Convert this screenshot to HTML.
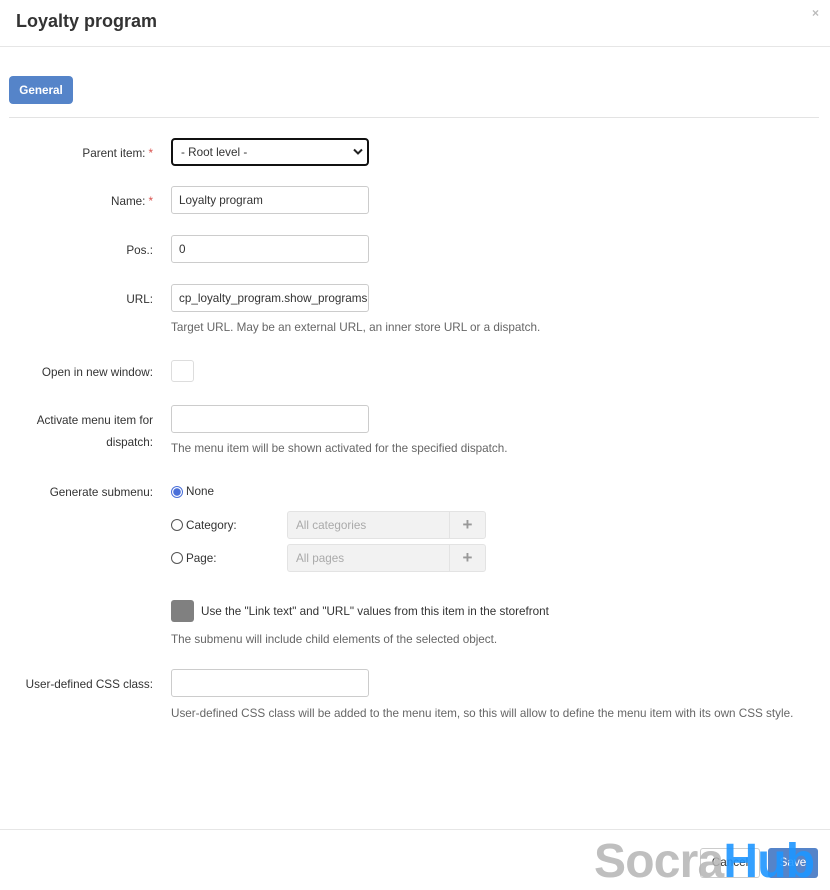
<!DOCTYPE html>
<html><head><meta charset="utf-8"><style>
*{box-sizing:border-box;margin:0;padding:0}
body{width:830px;height:889px;background:#fff;font-family:"Liberation Sans",Arial,sans-serif;font-size:11.7px;color:#333;position:relative;overflow:hidden}
.a{position:absolute}
.lbl{position:absolute;right:677px;text-align:right;color:#333;line-height:16px;white-space:nowrap;margin-top:1px}
.req{color:#d9534f;margin-left:3px}
.inp{position:absolute;left:171px;width:198px;height:28px;border:1px solid #ccc;border-radius:3px;background:#fff;padding:0 7px;line-height:27px;color:#333;white-space:nowrap;overflow:hidden}
.help{position:absolute;left:171px;color:#666;line-height:14px;white-space:nowrap;margin-top:1px}
.radio{position:absolute;left:171px;width:12px;height:12px;border:1px solid #555;border-radius:50%;background:#fff}
.pick{position:absolute;left:287px;width:199px;height:28px;border:1px solid #e3e3e3;border-radius:3px;background:#f2f2f2;color:#aaa;padding-left:8px;line-height:27px}
.pick span{position:absolute;right:0;top:0;width:36px;height:26px;border-left:1px solid #e3e3e3;text-align:center;color:#999;font-size:17px;font-weight:bold;line-height:25px}
</style></head><body>
<div class="a" style="left:16px;top:11px;font-size:18px;font-weight:bold;color:#333">Loyalty program</div>
<div class="a" style="left:812px;top:6px;color:#bbb;font-size:12px;font-weight:bold">×</div>
<div class="a" style="left:0;top:46px;width:830px;height:1px;background:#e6e6e6"></div>
<div class="a" style="left:9px;top:76px;width:64px;height:28px;background:#5584c9;border-radius:4px;color:#fff;font-weight:bold;text-align:center;line-height:29px">General</div>
<div class="a" style="left:9px;top:117px;width:810px;height:1px;background:#e3e3e3"></div>

<div class="lbl" style="top:145px">Parent item:<span class="req">*</span></div>
<div class="inp" style="top:138px;border:2px solid #111;border-radius:4px;line-height:25px;padding-left:8px">- Root level -</div>
<svg class="a" style="left:353px;top:148px" width="10" height="8"><path d="M1 1.5L5 5.5L9 1.5" fill="none" stroke="#222" stroke-width="2"/></svg>

<div class="lbl" style="top:193px">Name:<span class="req">*</span></div>
<div class="inp" style="top:186px">Loyalty program</div>

<div class="lbl" style="top:242px">Pos.:</div>
<div class="inp" style="top:235px">0</div>

<div class="lbl" style="top:291px">URL:</div>
<div class="inp" style="top:284px">cp_loyalty_program.show_programs</div>
<div class="help" style="top:320px">Target URL. May be an external URL, an inner store URL or a dispatch.</div>

<div class="lbl" style="top:364px">Open in new window:</div>
<div class="a" style="left:171px;top:360px;width:23px;height:22px;border:1px solid #ddd;border-radius:3px"></div>

<div class="lbl" style="top:409px;line-height:22px">Activate menu item for<br>dispatch:</div>
<div class="inp" style="top:405px"></div>
<div class="help" style="top:441px">The menu item will be shown activated for the specified dispatch.</div>

<div class="lbl" style="top:484px">Generate submenu:</div>
<div class="radio" style="top:486px;border-color:#4a6fd9;background:radial-gradient(circle,#4a6fd9 3.5px,#fff 4px)"></div>
<div class="a" style="left:186px;top:485px">None</div>
<div class="radio" style="top:519px"></div>
<div class="a" style="left:186px;top:519px">Category:</div>
<div class="pick" style="top:511px">All categories<span>+</span></div>
<div class="radio" style="top:552px"></div>
<div class="a" style="left:186px;top:552px">Page:</div>
<div class="pick" style="top:544px">All pages<span>+</span></div>

<div class="a" style="left:171px;top:600px;width:23px;height:22px;background:#808080;border-radius:3px"></div>
<div class="a" style="left:201px;top:605px">Use the "Link text" and "URL" values from this item in the storefront</div>
<div class="help" style="top:632px">The submenu will include child elements of the selected object.</div>

<div class="lbl" style="top:676px">User-defined CSS class:</div>
<div class="inp" style="top:669px"></div>
<div class="help" style="top:706px">User-defined CSS class will be added to the menu item, so this will allow to define the menu item with its own CSS style.</div>

<div class="a" style="left:0;top:829px;width:830px;height:1px;background:#e6e6e6"></div>
<div class="a" style="left:700px;top:848px;width:60px;height:30px;border:1px solid #ccc;border-radius:3px;text-align:center;line-height:28px;color:#333">Cancel</div>
<div class="a" style="left:768px;top:848px;width:50px;height:30px;background:#5584c9;border-radius:3px;text-align:center;line-height:30px;color:#fff">Save</div>
<div class="a" style="left:594px;top:834px;font-size:48px;font-weight:bold;line-height:56px;letter-spacing:-0.8px;white-space:nowrap"><span style="color:rgba(180,180,180,.85)">Socra</span><span style="color:rgba(30,150,255,.9)">Hub</span></div>
</body></html>
